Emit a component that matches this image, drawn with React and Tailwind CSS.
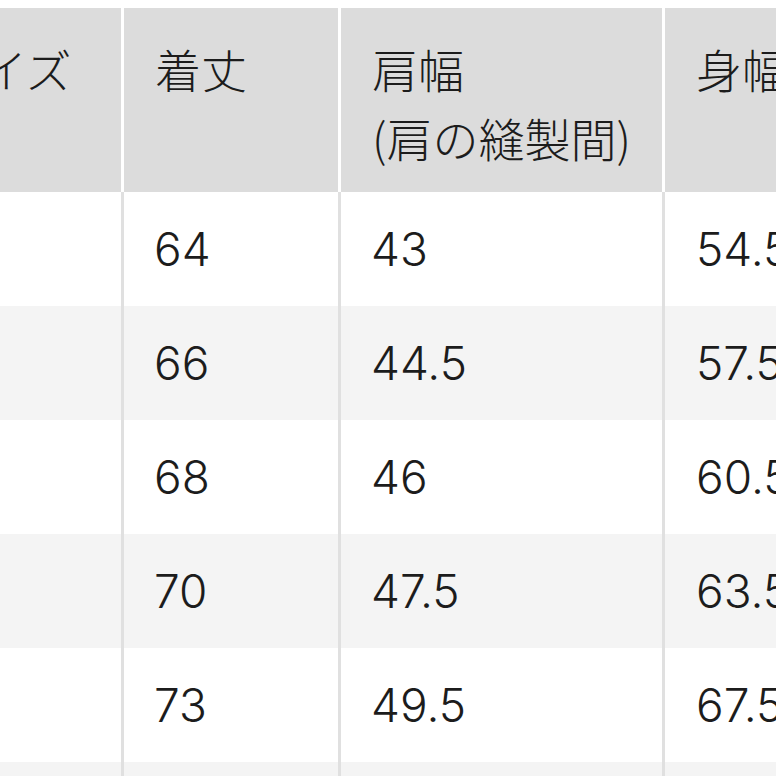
import React from "react";

const rows = [
  { size: "S", length: "64", shoulder: "43", chest: "54.5" },
  { size: "M", length: "66", shoulder: "44.5", chest: "57.5" },
  { size: "L", length: "68", shoulder: "46", chest: "60.5" },
  { size: "XL", length: "70", shoulder: "47.5", chest: "63.5" },
  { size: "XXL", length: "73", shoulder: "49.5", chest: "67.5" },
  { size: "3XL", length: "76", shoulder: "51", chest: "71.5" },
];

const num = { fontFamily: 'Inter, "Noto Sans", sans-serif' };

export default function App() {
  return (
    <div
      className="w-[776px] h-[776px] overflow-hidden bg-white pt-2 text-[#1c1c1c] font-light"
      style={{ fontFamily: '"Noto Sans CJK JP", "Noto Sans", sans-serif' }}
    >
      <div className="ml-[-96px] w-[1060px] grid grid-cols-[220px_217px_324px_300px] text-[46px]">
        {/* header */}
        <div className="bg-[#dcdcdc] border-r-[3px] border-white h-[184px] pl-[31px] pt-[26px] leading-[69px] whitespace-nowrap">
          サイズ
        </div>
        <div className="bg-[#dcdcdc] border-r-[3px] border-white h-[184px] pl-[31px] pt-[26px] leading-[69px] whitespace-nowrap">
          着丈
        </div>
        <div className="bg-[#dcdcdc] border-r-[3px] border-white h-[184px] pl-[31px] pt-[26px] leading-[69px] whitespace-nowrap">
          <div>肩幅</div>
          <div>(肩の縫製間)</div>
        </div>
        <div className="bg-[#dcdcdc] h-[184px] pl-[31px] pt-[26px] leading-[69px] whitespace-nowrap">
          身幅
        </div>

        {/* body */}
        {rows.map((row, i) => {
          const bg = i % 2 === 0 ? "bg-white" : "bg-[#f4f4f4]";
          return (
            <React.Fragment key={row.size}>
              <div className={`${bg} border-r-[3px] border-[#e0e0e0] h-[114px] pl-[31px] flex items-center`}>
                <span className="invisible">{row.size}</span>
              </div>
              <div className={`${bg} border-r-[3px] border-[#e0e0e0] h-[114px] pl-[30px] flex items-center`} style={num}>
                {row.length}
              </div>
              <div className={`${bg} border-r-[3px] border-[#e0e0e0] h-[114px] pl-[30px] flex items-center`} style={num}>
                {row.shoulder}
              </div>
              <div className={`${bg} h-[114px] pl-[31px] flex items-center`} style={num}>
                {row.chest}
              </div>
            </React.Fragment>
          );
        })}
      </div>
    </div>
  );
}
